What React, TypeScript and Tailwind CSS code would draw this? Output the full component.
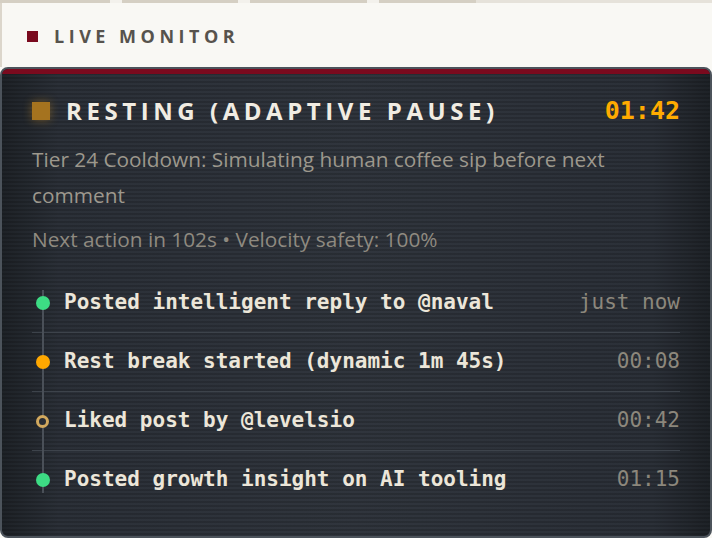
type Status = "ok" | "rest" | "like"

interface LogItem {
  status: Status
  text: string
  time: string
}

const log: LogItem[] = [
  { status: "ok", text: "Posted intelligent reply to @naval", time: "just now" },
  { status: "rest", text: "Rest break started (dynamic 1m 45s)", time: "00:08" },
  { status: "like", text: "Liked post by @levelsio", time: "00:42" },
  { status: "ok", text: "Posted growth insight on AI tooling", time: "01:15" },
]

function Dot({ status }: { status: Status }) {
  if (status === "like") {
    return <span className="relative z-10 h-[13px] w-[13px] shrink-0 rounded-full border-[3px] border-[#d2a95e] bg-[#2a2e35]" />
  }
  return (
    <span
      className={
        status === "ok"
          ? "relative z-10 h-[14px] w-[14px] shrink-0 rounded-full bg-[#3ddc84]"
          : "relative z-10 h-[14px] w-[14px] shrink-0 rounded-full bg-[#ffa800]"
      }
    />
  )
}

export default function App() {
  return (
    <div className="h-[538px] w-[712px] overflow-hidden bg-[#f9f8f4] font-['Open_Sans',sans-serif]">
      {/* tab strip */}
      <div className="flex h-[3px] bg-[#e6e2da]">
        <div className="w-[110px] bg-[#d5cfc3]" />
        <div className="w-[12px] bg-[#f3f1ec]" />
        <div className="w-[116px] bg-[#d5cfc3]" />
        <div className="w-[12px] bg-[#f3f1ec]" />
        <div className="w-[117px] bg-[#d5cfc3]" />
        <div className="w-[12px] bg-[#f3f1ec]" />
        <div className="w-[97px] bg-[#d5cfc3]" />
      </div>

      <div className="flex h-[64px] items-center border-l-2 border-[#dcd6cb] pl-[25px] pt-[3px]">
        <span className="h-[11px] w-[11px] bg-[#7a0a1e]" />
        <h2 className="ml-[16px] text-[18px] font-bold tracking-[0.25em] text-[#57534d]">LIVE MONITOR</h2>
      </div>

      <div className="overflow-hidden rounded-lg border-2 border-[#4c535b] [background-image:repeating-linear-gradient(180deg,rgba(0,0,0,0.16)_0px,rgba(0,0,0,0.16)_2px,transparent_2px,transparent_4px),linear-gradient(90deg,#1e2227_0%,#2b3038_8%,#30353d_50%,#2b3038_92%,#1e2227_100%)]">
        <div className="h-[5px] bg-[#7a0a1e]" />
        <div className="px-[30px] pb-[27px] pt-[21px]">
          <div className="flex items-center">
            <span className="h-[18px] w-[18px] bg-[#a5731f] shadow-[0_0_10px_rgba(245,166,35,0.35)]" />
            <h1 className="ml-[16px] flex-1 text-[24px] font-bold leading-[32px] tracking-[0.19em] text-[#f1ece2]">
              RESTING (ADAPTIVE PAUSE)
            </h1>
            <span className="font-['DejaVu_Sans_Mono',monospace] text-[25px] font-bold leading-[32px] text-[#ffab00]">01:42</span>
          </div>

          <p className="mt-[14px] text-[20.8px] leading-[36px] text-[#9d988d]">
            Tier 24 Cooldown: Simulating human coffee sip before next comment
          </p>
          <p className="mt-2 text-[20.8px] leading-[36px] text-[#8f8a80]">Next action in 102s • Velocity safety: 100%</p>

          <ul className="relative mt-[17px] font-['DejaVu_Sans_Mono',monospace]">
            <span className="absolute bottom-[16px] left-[10px] top-[16px] w-[2px] bg-[#4a5058]" />
            {log.map((item, i) => (
              <li
                key={i}
                className={
                  i < log.length - 1
                    ? "flex h-[59px] items-center border-b border-[#3d434b]"
                    : "flex h-[58px] items-center"
                }
              >
                <span className="flex w-[32px] justify-start pl-[4px]">
                  <Dot status={item.status} />
                </span>
                <span className="flex-1 text-[21px] font-bold text-[#ece6d9]">{item.text}</span>
                <span className="text-[21px] text-[#8c877c]">{item.time}</span>
              </li>
            ))}
          </ul>
        </div>
      </div>
    </div>
  )
}
